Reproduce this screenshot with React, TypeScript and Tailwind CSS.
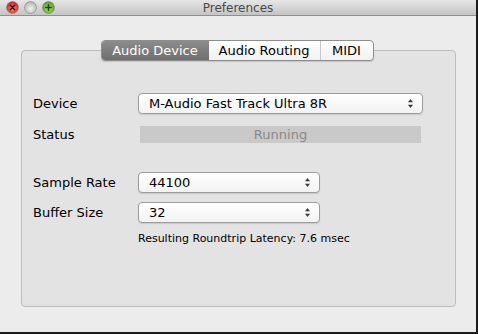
import React from "react";

const font = { fontFamily: '"DejaVu Sans", "Liberation Sans", sans-serif' };

const Light = ({ kind }: { kind: "close" | "min" | "zoom" }) => {
  const fill =
    kind === "close" ? "url(#gr)" : kind === "zoom" ? "url(#gg)" : "url(#gy)";
  return (
    <svg width="13" height="13" viewBox="0 0 12 12">
      <defs>
        <radialGradient id="gr" cx="50%" cy="60%" r="60%">
          <stop offset="0%" stopColor="#f28b7d" />
          <stop offset="100%" stopColor="#c0261c" />
        </radialGradient>
        <radialGradient id="gg" cx="50%" cy="60%" r="60%">
          <stop offset="0%" stopColor="#b6e27a" />
          <stop offset="100%" stopColor="#4e9a1f" />
        </radialGradient>
        <radialGradient id="gy" cx="50%" cy="60%" r="60%">
          <stop offset="0%" stopColor="#f2f2f2" />
          <stop offset="100%" stopColor="#b5b5b5" />
        </radialGradient>
      </defs>
      <circle cx="6" cy="6" r="5.5" fill={fill} stroke="#7a7a7a" strokeWidth="0.5" />
      {kind === "close" && (
        <path d="M4 4 L8 8 M8 4 L4 8" stroke="#5a0c06" strokeWidth="1.4" strokeLinecap="round" />
      )}
      {kind === "zoom" && (
        <path d="M6 3.5 V8.5 M3.5 6 H8.5" stroke="#1f4a08" strokeWidth="1.5" strokeLinecap="round" />
      )}
    </svg>
  );
};

const Arrows = () => (
  <svg width="7" height="11" viewBox="0 0 7 11">
    <path d="M3.5 1 L6 4.2 H1 Z" fill="#3a3a3a" />
    <path d="M3.5 10 L6 6.8 H1 Z" fill="#3a3a3a" />
  </svg>
);

const Select = ({ value, width }: { value: string; width: string }) => (
  <div
    className={`${width} h-[21px] flex items-center justify-between pl-[10px] pr-[8px] rounded-[4px] border border-[#9d9d9d] bg-gradient-to-b from-white to-[#f3f3f3] shadow-[0_1px_1px_rgba(0,0,0,0.12)] text-[13px] text-black`}
  >
    <span>{value}</span>
    <Arrows />
  </div>
);

const Label = ({ children }: { children: React.ReactNode }) => (
  <div className="w-[105px] text-[13px] text-black">{children}</div>
);

export default function App() {
  return (
    <div className="w-[478px] h-[334px] bg-[#1c1c1c]" style={font}>
      <div className="w-[476px] h-[332px] bg-[#ececec] flex flex-col">
        <div className="h-[16px] flex items-center relative bg-gradient-to-b from-[#e6e6e6] to-[#c4c4c4] border-b border-[#8f8f8f]">
          <div className="flex items-center gap-[5px] pl-[6px]">
            <Light kind="close" />
            <Light kind="min" />
            <Light kind="zoom" />
          </div>
          <div className="absolute inset-0 flex items-center justify-center text-[12px] text-[#4a4a4a]">
            Preferences
          </div>
        </div>

        <div className="flex justify-center mt-[24px] relative z-10 pr-[2px]">
          <div className="flex h-[21px] rounded-[4px] border border-[#8e8e8e] bg-gradient-to-b from-white to-[#f1f1f1] shadow-[0_1px_1px_rgba(0,0,0,0.15)] overflow-hidden text-[13px]">
            <div className="w-[107px] flex items-center justify-center text-white bg-gradient-to-b from-[#8c8c8c] to-[#6f6f6f]">
              Audio Device
            </div>
            <div className="w-[112px] flex items-center justify-center text-black border-r border-[#c8c8c8]">
              Audio Routing
            </div>
            <div className="w-[52px] flex items-center justify-center text-black">MIDI</div>
          </div>
        </div>

        <div className="ml-[21px] w-[435px] h-[257px] -mt-[11px] rounded-[4px] border border-[#bdbdbd] bg-[#e3e3e3] pl-[11px] pt-[42px] flex flex-col">
          <div className="flex items-center h-[21px]">
            <Label>Device</Label>
            <Select value="M-Audio Fast Track Ultra 8R" width="w-[285px]" />
          </div>
          <div className="flex items-center h-[17px] mt-[12px]">
            <Label>Status</Label>
            <div className="ml-[2px] w-[281px] h-[17px] bg-[#c9c9c9] flex items-center justify-center text-[13px] text-[#8a8a8a]">
              Running
            </div>
          </div>
          <div className="flex items-center h-[21px] mt-[29px]">
            <Label>Sample Rate</Label>
            <Select value="44100" width="w-[182px]" />
          </div>
          <div className="flex items-center h-[21px] mt-[9px]">
            <Label>Buffer Size</Label>
            <Select value="32" width="w-[182px]" />
          </div>
          <div className="pl-[105px] mt-[9px] text-[11px] text-black leading-[14px]">
            Resulting Roundtrip Latency: 7.6 msec
          </div>
        </div>
      </div>
    </div>
  );
}
